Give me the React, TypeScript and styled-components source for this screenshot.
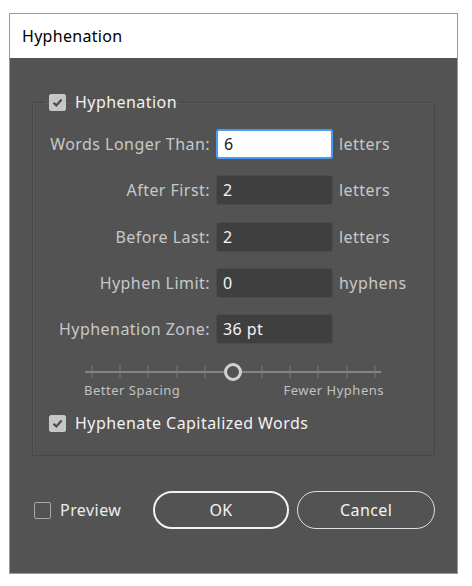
import React from 'react';
import styled, { createGlobalStyle } from 'styled-components';

const GlobalStyle = createGlobalStyle`
  html, body {
    margin: 0;
    background: #ffffff;
  }
  body {
    font-family: 'Noto Sans', 'Open Sans', sans-serif;
    letter-spacing: 0.45px;
  }
`;

const Dialog = styled.div`
  margin: 13px 0 0 9px;
  width: 449px;
  height: 561px;
  box-sizing: border-box;
  border: 1px solid #9a9a9a;
  display: flex;
  flex-direction: column;
`;

const TitleBar = styled.div`
  height: 44px;
  flex: none;
  background: #ffffff;
  color: #000;
  font-size: 16px;
  letter-spacing: 0.3px;
  display: flex;
  align-items: center;
  padding-left: 12px;
`;

const Body = styled.div`
  flex: 1;
  background: #535353;
  padding: 33px 22px 0 22px;
  display: flex;
  flex-direction: column;
`;

const Group = styled.fieldset`
  margin: 0;
  padding: 0;
  height: 365px;
  box-sizing: border-box;
  border: 1px solid #474747;
  border-radius: 2px;
  box-shadow: inset 1px 1px 0 #5a5a5a;
`;

const Legend = styled.legend`
  margin-left: 12px;
  padding: 0 4px;
  display: flex;
  align-items: center;
  gap: 9px;
  color: #f2f2f2;
  font-size: 16px;
  line-height: 22px;
`;

const Box = styled.span<{ $checked?: boolean }>`
  width: 17px;
  height: 17px;
  flex: none;
  box-sizing: border-box;
  border-radius: 2px;
  display: inline-flex;
  align-items: center;
  justify-content: center;
  background: ${(p) => (p.$checked ? '#c6c6c6' : 'transparent')};
  border: 1px solid ${(p) => (p.$checked ? '#c6c6c6' : '#a8a8a8')};
`;

const Fields = styled.div`
  display: grid;
  grid-template-columns: 177px 117px auto;
  grid-auto-rows: 30px;
  column-gap: 6px;
  row-gap: 16.25px;
  align-items: center;
  margin-top: 16px;
`;

const Label = styled.span`
  text-align: right;
  color: #c8c8c8;
  font-size: 16px;
  white-space: nowrap;
`;

const Unit = styled.span`
  color: #c8c8c8;
  font-size: 16px;
`;

const Input = styled.div<{ $focused?: boolean }>`
  height: 30px;
  box-sizing: border-box;
  border-radius: 3px;
  display: flex;
  align-items: center;
  padding-left: 6px;
  font-size: 16px;
  color: ${(p) => (p.$focused ? '#1a1a1a' : '#f4f4f4')};
  background: ${(p) => (p.$focused ? '#ffffff' : '#3f3f3f')};
  border: ${(p) => (p.$focused ? '2px solid #4a9cf2' : '1px solid #4b4b4b')};
`;

const SliderWrap = styled.div`
  margin: 18px 0 0 52px;
  width: 296px;

  svg {
    display: block;
  }
`;

const SliderLabels = styled.div`
  display: flex;
  justify-content: space-between;
  color: #c2c2c2;
  font-size: 13px;
  line-height: 16px;
  letter-spacing: 0.5px;
  margin-left: -1px;
  margin-right: -3px;
`;

const CheckRow = styled.label`
  display: flex;
  align-items: center;
  gap: 9px;
  margin: 14px 0 0 16px;
  color: #f2f2f2;
  font-size: 16px;
`;

const Footer = styled.div`
  display: flex;
  align-items: center;
  margin-top: 35px;
  margin-left: 2px;
`;

const PreviewLabel = styled.label`
  display: flex;
  align-items: center;
  gap: 9px;
  color: #ececec;
  font-size: 16px;
  width: 119px;
`;

const Button = styled.button<{ $primary?: boolean }>`
  height: 38px;
  width: ${(p) => (p.$primary ? '137px' : '138px')};
  box-sizing: border-box;
  border-radius: 19px;
  background: transparent;
  color: #f4f4f4;
  font-family: inherit;
  font-size: 16px;
  letter-spacing: 0.4px;
  border: ${(p) => (p.$primary ? '2.5px solid #f2f2f2' : '1.5px solid #e0e0e0')};
  & + & {
    margin-left: 8px;
  }
`;

const Check = () => (
  <svg width="13" height="13" viewBox="0 0 13 13">
    <path d="M2.5 6.8 L5.3 9.4 L10.6 3.6" fill="none" stroke="#4a4a4a" strokeWidth="2.2" />
  </svg>
);

const ticks = [7, 35, 63, 92, 120, 177, 205, 233, 262, 290];

const Slider = () => (
  <svg width="296" height="20" viewBox="0 0 296 20">
    <line x1="0" y1="10" x2="296" y2="10" stroke="#858585" strokeWidth="2" />
    {ticks.map((x) => (
      <line key={x} x1={x} y1="3" x2={x} y2="16" stroke="#7a7a7a" strokeWidth="1" />
    ))}
    <circle cx="148" cy="10" r="7.5" fill="#535353" stroke="#d2d2d2" strokeWidth="3" />
  </svg>
);

const fields = [
  { label: 'Words Longer Than:', value: '6', unit: 'letters', focused: true },
  { label: 'After First:', value: '2', unit: 'letters' },
  { label: 'Before Last:', value: '2', unit: 'letters' },
  { label: 'Hyphen Limit:', value: '0', unit: 'hyphens' },
  { label: 'Hyphenation Zone:', value: '36 pt', unit: '' }
];

const App: React.FC = () => (
  <>
    <GlobalStyle />
    <Dialog>
      <TitleBar>Hyphenation</TitleBar>
      <Body>
        <Group>
          <Legend>
            <Box $checked>
              <Check />
            </Box>
            Hyphenation
          </Legend>
          <Fields>
            {fields.map((f) => (
              <React.Fragment key={f.label}>
                <Label>{f.label}</Label>
                <Input $focused={f.focused}>{f.value}</Input>
                <Unit>{f.unit}</Unit>
              </React.Fragment>
            ))}
          </Fields>
          <SliderWrap>
            <Slider />
            <SliderLabels>
              <span>Better Spacing</span>
              <span>Fewer Hyphens</span>
            </SliderLabels>
          </SliderWrap>
          <CheckRow>
            <Box $checked>
              <Check />
            </Box>
            Hyphenate Capitalized Words
          </CheckRow>
        </Group>
        <Footer>
          <PreviewLabel>
            <Box />
            Preview
          </PreviewLabel>
          <Button $primary>OK</Button>
          <Button>Cancel</Button>
        </Footer>
      </Body>
    </Dialog>
  </>
);

export default App;
